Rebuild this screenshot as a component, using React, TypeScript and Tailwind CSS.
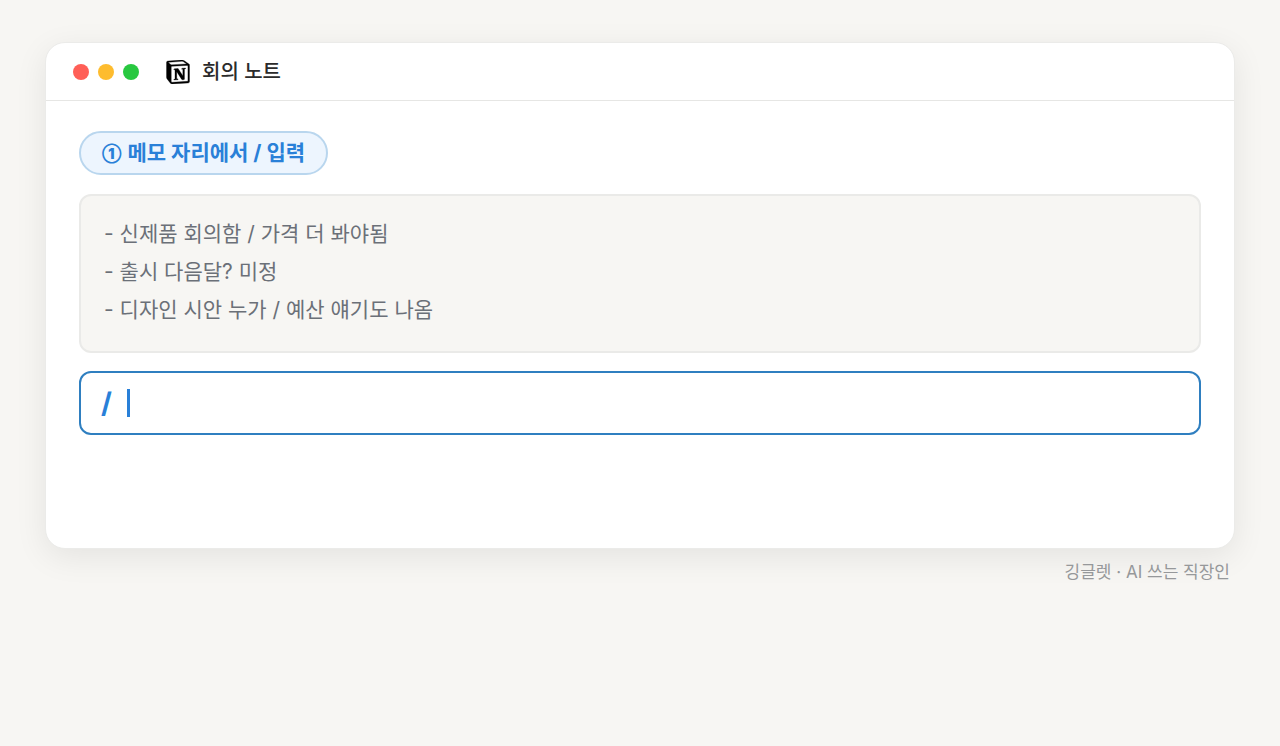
import { SiNotion } from "react-icons/si";

const notes = [
  "- 신제품 회의함 / 가격 더 봐야됨",
  "- 출시 다음달? 미정",
  "- 디자인 시안 누가 / 예산 얘기도 나옴",
];

const TitleBar = () => (
  <header className="flex h-[58px] items-center border-b border-[#e6e6e4] px-[27px]">
    <div className="flex gap-[9px]">
      <span className="size-4 rounded-full bg-[#ff5f57]" />
      <span className="size-4 rounded-full bg-[#febc2e]" />
      <span className="size-4 rounded-full bg-[#28c840]" />
    </div>
    <SiNotion className="ml-[27px] size-6 stroke-black text-black" strokeWidth={0.3} />
    <h1 className="ml-3 text-[20px] font-medium text-[#2b2b2b]">회의 노트</h1>
  </header>
);

const SlashInput = () => (
  <div className="mt-[18px] flex h-16 items-center rounded-xl border-2 border-[#2f7fc0] px-5">
    <input
      type="text"
      aria-label="명령어 입력"
      defaultValue="/"
      className="h-full w-[26px] text-[28px] font-bold text-[#2980d8] outline-none"
    />
    <span className="h-7 w-[3px] bg-[#2980d8]" />
  </div>
);

export default function App() {
  return (
    <div className="min-h-screen bg-[#f7f6f3] px-[45px] pt-[42px] font-['Inter','Noto_Sans_CJK_KR',sans-serif]">
      <main className="rounded-[20px] border border-[#ebebe9] bg-white shadow-[0_8px_32px_rgba(0,0,0,0.08)]">
        <TitleBar />
        <section className="px-[33px] pt-[30px] pb-[113px]">
          <h2 className="flex h-11 w-fit items-center gap-1.5 rounded-full border-2 border-[#b9d6ee] bg-[#edf5fe] px-[21px] text-[21px] font-bold text-[#2980d8]">
            <span className="text-[14px] font-black">①</span>
            메모 자리에서 / 입력
          </h2>
          <ul className="mt-[19px] rounded-xl border-2 border-[#eaeae8] bg-[#f7f6f3] px-[23px] pt-[19px] pb-[22px] text-[21px] leading-[38px] text-[#6b7078]">
            {notes.map((note) => (
              <li key={note}>{note}</li>
            ))}
          </ul>
          <SlashInput />
        </section>
      </main>
      <footer className="mt-[9px] pr-[5px] text-right text-[17px] leading-7 text-[#96989a]">
        깅글렛 · AI 쓰는 직장인
      </footer>
    </div>
  );
}
